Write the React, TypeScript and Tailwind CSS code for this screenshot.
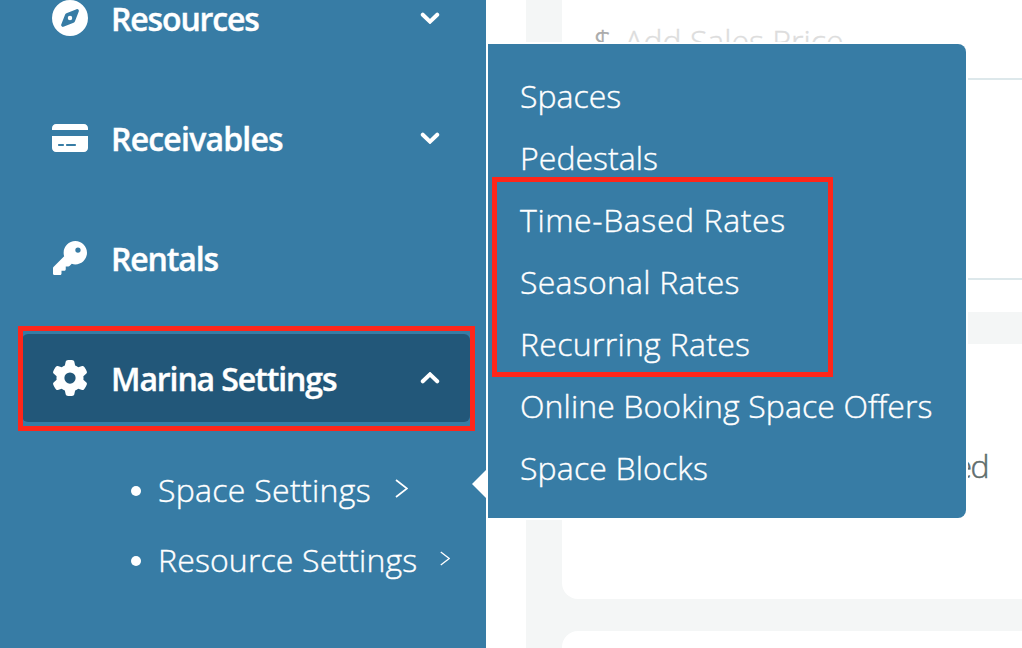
import type { ReactNode } from 'react';
import clsx from 'clsx';
import { FaCompass, FaCreditCard, FaGear, FaKey } from 'react-icons/fa6';

interface NavItem {
    label: string;
    icon: ReactNode;
    tracking: string;
    chevron?: 'up' | 'down';
    active?: boolean;
}

const navItems: NavItem[] = [
    { label: 'Resources', icon: <FaCompass className="size-9" />, tracking: 'tracking-[-1.15px]', chevron: 'down' },
    { label: 'Receivables', icon: <FaCreditCard className="h-8 w-9" />, tracking: 'tracking-[-0.8px]', chevron: 'down' },
    { label: 'Rentals', icon: <FaKey className="mx-px size-[34px]" />, tracking: 'tracking-[-1.15px]' },
    { label: 'Marina Settings', icon: <FaGear className="size-9" />, tracking: 'tracking-[-1.1px]', chevron: 'up', active: true },
];

const subItems = [
    { label: 'Space Settings', tracking: 'tracking-[0.3px]', arrow: 'ml-[24px] h-[19px] w-[13px]' },
    { label: 'Resource Settings', tracking: 'tracking-[0.15px]', arrow: 'ml-[23px] h-[15px] w-[10px]' },
];

const flyoutItems = [
    { label: 'Spaces', tracking: 'tracking-[0px]' },
    { label: 'Pedestals', tracking: 'tracking-[0.05px]' },
    { label: 'Time-Based Rates', tracking: 'tracking-[0.6px]' },
    { label: 'Seasonal Rates', tracking: 'tracking-[0.25px]' },
    { label: 'Recurring Rates', tracking: 'tracking-[0.3px]' },
    { label: 'Online Booking Space Offers', tracking: 'tracking-[0.1px]' },
    { label: 'Space Blocks', tracking: 'tracking-[0.15px]' },
];

function Chevron({ direction }: { direction: 'up' | 'down' }) {
    return (
        <svg viewBox="0 0 20 12" className={clsx('h-3 w-5', direction === 'up' && 'rotate-180')} fill="none">
            <path d="M2.8 2.7 10 9.6l7.2-6.9" stroke="currentColor" strokeWidth="4" strokeLinecap="round" />
        </svg>
    );
}

function Sidebar() {
    return (
        <aside className="w-[486px] shrink-0 bg-[#377ca5] text-white">
            <nav className="-mt-[42px]">
                {navItems.map((item) => (
                    <div key={item.label} className="flex h-[120px] items-center pr-4 pl-[22px]">
                        <div
                            className={clsx(
                                'flex h-[88px] w-full items-center rounded-md pr-[30px] pl-[30px]',
                                item.active && 'bg-[#225779]',
                            )}
                        >
                            {item.icon}
                            <span
                                className={clsx(
                                    'mt-0.5 ml-[23px] flex-1 text-[32px] leading-none font-semibold [-webkit-text-stroke:0.4px_white]',
                                    item.tracking,
                                )}
                            >
                                {item.label}
                            </span>
                            {item.chevron && <Chevron direction={item.chevron} />}
                        </div>
                    </div>
                ))}
            </nav>

            <ul className="mt-4 pl-[131px]">
                {subItems.map((item) => (
                    <li key={item.label} className="flex h-[70px] items-center">
                        <span className="mt-1 size-2.5 rounded-full bg-white" />
                        <span
                            className={clsx(
                                'mt-0.5 ml-[17px] text-[32px] leading-none font-light [-webkit-text-stroke:0.4px_white]',
                                item.tracking,
                            )}
                        >
                            {item.label}
                        </span>
                        <svg viewBox="0 0 13 19" className={clsx('-mt-0.5', item.arrow)} fill="none">
                            <path d="m1 1 11 8.5L1 18" stroke="currentColor" strokeWidth="1.7" />
                        </svg>
                    </li>
                ))}
            </ul>
        </aside>
    );
}

function Content() {
    return (
        <main className="ml-10 flex flex-1 flex-col gap-8 bg-[#f4f6f6] pl-9">
            <section className="flex h-[312px] shrink-0 flex-col bg-white">
                <div className="flex h-20 items-center gap-3 border-b-2 border-[#dde8eb] pt-1 pl-8 text-[32px] font-light">
                    <span className="text-[#aaaaaa] [-webkit-text-stroke:0.5px_#aaaaaa]">$</span>
                    <span className="whitespace-nowrap text-[#dddddd] [-webkit-text-stroke:0.4px_#dddddd]">Add Sales Price</span>
                </div>
                <div className="h-[200px] border-b-2 border-[#dde8eb]" />
            </section>
            <section className="flex h-[255px] shrink-0 justify-end rounded-bl-2xl bg-white pt-[100px] pr-[34px]">
                <span className="text-[32px] leading-[44px] font-light tracking-[-1.5px] text-[#5f6d6d] [-webkit-text-stroke:0.5px_#5f6d6d]">
                    ed
                </span>
            </section>
            <section className="h-20 shrink-0 rounded-tl-2xl bg-white" />
        </main>
    );
}

function Flyout() {
    return (
        <div className="absolute top-[42px] left-[486px] h-[478px] w-[482px] bg-white p-0.5">
            <ul className="h-full rounded-r-lg bg-[#377ca5] pt-[21px] pl-8 text-[32px] font-light text-white [-webkit-text-stroke:0.4px_white]">
                {flyoutItems.map((item) => (
                    <li key={item.label} className={clsx('h-[62px] leading-[62px] whitespace-nowrap', item.tracking)}>
                        {item.label}
                    </li>
                ))}
            </ul>
            {/* Pointer towards the open submenu entry */}
            <svg viewBox="0 0 14 28" className="absolute top-[428px] -left-3.5 h-7 w-3.5 fill-white">
                <path d="M14 0 0 14l14 14z" />
            </svg>
        </div>
    );
}

export default function App() {
    return (
        <div className="relative flex h-[648px] w-[1022px] overflow-hidden bg-white font-['Open_Sans',sans-serif]">
            <Sidebar />
            <Content />
            <Flyout />

            {/* Callouts */}
            <div className="absolute top-[326px] left-[18px] h-[105px] w-[457px] border-5 border-[#ff261a]" />
            <div className="absolute top-[177px] left-[492px] h-[200px] w-[341px] border-5 border-[#ff261a]" />
        </div>
    );
}
